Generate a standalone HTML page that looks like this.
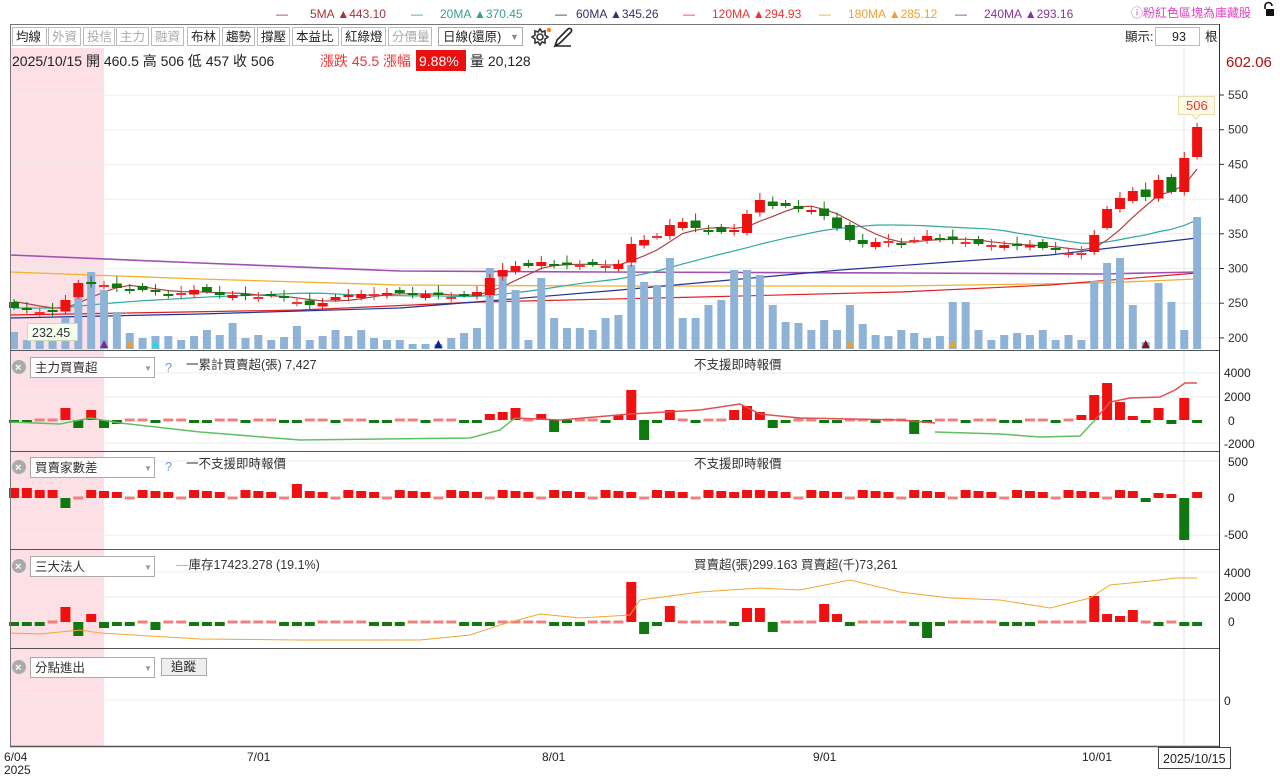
<!DOCTYPE html>
<html><head><meta charset="utf-8">
<style>
body{margin:0;background:#fff;width:1280px;height:775px;overflow:hidden;font-family:"Liberation Sans","Noto Sans CJK TC",sans-serif;}
svg text{font-family:"Liberation Sans","Noto Sans CJK TC",sans-serif;}
</style></head>
<body>
<svg id="s" width="1280" height="775" xmlns="http://www.w3.org/2000/svg">
<rect x="11" y="48" width="93" height="698" fill="#fde0e6"/>
<g id="grid" stroke="#ececec" stroke-width="1"></g>
<line x1="1184" y1="48" x2="1184" y2="746" stroke="#e6e6e6"/>
<g id="mas" fill="none"></g>
<g id="vol" fill="#8fb3d6"></g>
<g id="candles"></g>
<g id="subs"></g>

<rect x="10.5" y="24.5" width="1209" height="722" fill="none" stroke="#777"/>
<line x1="10" y1="350.5" x2="1220" y2="350.5" stroke="#555"/>
<line x1="10" y1="451.5" x2="1220" y2="451.5" stroke="#555"/>
<line x1="10" y1="549.5" x2="1220" y2="549.5" stroke="#555"/>
<line x1="10" y1="648.5" x2="1220" y2="648.5" stroke="#555"/>
<line x1="10" y1="746.5" x2="1220" y2="746.5" stroke="#555" stroke-width="1.5"/>
<line x1="1219.5" y1="24" x2="1219.5" y2="747" stroke="#333"/>

<g font-size="12">
<text x="276" y="18" fill="#a33">—</text><text x="310" y="18" fill="#a33">5MA ▲443.10</text>
<text x="411" y="18" fill="#3a9c96">—</text><text x="440" y="18" fill="#3a9c96">20MA ▲370.45</text>
<text x="555" y="18" fill="#334">—</text><text x="576" y="18" fill="#336">60MA ▲345.26</text>
<text x="683" y="18" fill="#e33">—</text><text x="712" y="18" fill="#e33">120MA ▲294.93</text>
<text x="819" y="18" fill="#f0a030">—</text><text x="848" y="18" fill="#f0a030">180MA ▲285.12</text>
<text x="955" y="18" fill="#839">—</text><text x="984" y="18" fill="#839">240MA ▲293.16</text>
<text x="1131" y="17" fill="#e040c0" font-size="12">ⓘ粉紅色區塊為庫藏股</text>
</g>
<path d="M1265 9 v-3 a3.5 3.5 0 0 1 7 0" fill="none" stroke="#111" stroke-width="1.6"/>
<rect x="1266" y="9" width="8" height="7" fill="#111"/>

<g font-size="12.5">
<g id="tb"></g>
<rect x="438.5" y="27.5" width="84" height="18" fill="#fff" stroke="#aaa"/>
<text x="443" y="41" fill="#222">日線(還原)</text><text x="510" y="40" fill="#888" font-size="9">▼</text>
</g>
<g transform="translate(540,37)" fill="none" stroke="#333" stroke-width="1.6">
<circle r="3"/>
<path d="M0-8 L2-5 L5-6 L5-2 L8 0 L5 2 L5 6 L2 5 L0 8 L-2 5 L-5 6 L-5 2 L-8 0 L-5-2 L-5-6 L-2-5Z"/>
</g>
<circle cx="549" cy="30" r="2.2" fill="#f08020"/>
<path d="M555 46 L557 40 L568 29 A2 2 0 0 1 571 32 L560 43 Z M555 46 h16" fill="none" stroke="#222" stroke-width="1.6"/>
<text x="1125" y="41" font-size="12.5" fill="#222">顯示:</text>
<rect x="1155.5" y="27.5" width="44" height="18" fill="#fff" stroke="#bbb"/>
<text x="1172" y="41" font-size="12.5" fill="#222">93</text>
<text x="1205" y="41" font-size="12.5" fill="#222">根</text>

<g font-size="14">
<text x="12" y="66" fill="#222">2025/10/15 開 460.5  高 506  低 457  收 506</text>
<text x="320" y="66" fill="#e33">漲跌 45.5  漲幅</text>
<rect x="416" y="50" width="50" height="21" fill="#e81010"/>
<text x="419" y="66" fill="#fff">9.88%</text>
<text x="470" y="66" fill="#222">量 20,128</text>
</g>

<g font-size="12" fill="#333" id="pax"></g>
<text x="1226" y="67" font-size="15" fill="#b01010">602.06</text>
<rect x="1178.5" y="96.5" width="36" height="18" fill="#fffbe6" stroke="#e8dcb0"/>
<path d="M1192 114.5 l4 5 l4-5" fill="#fffbe6" stroke="#e8dcb0"/>
<text x="1186" y="110" font-size="13" fill="#e33">506</text>
<rect x="27.5" y="323.5" width="50" height="17" fill="#f4fbef" stroke="#c8dcb8"/>
<text x="32" y="337" font-size="12.5" fill="#333">232.45</text>

<g font-size="12.5">
<g id="hdrs"></g>
<text x="165" y="372" fill="#69c">?</text>
<text x="186" y="369" fill="#333">一累計買賣超(張) 7,427</text>
<text x="165" y="471" fill="#69c">?</text>
<text x="186" y="468" fill="#333">一不支援即時報價</text>
<text x="694" y="369" fill="#333">不支援即時報價</text>
<text x="694" y="468" fill="#333">不支援即時報價</text>
<text x="176" y="569" fill="#333"><tspan fill="#f0a030">—</tspan>庫存17423.278 (19.1%)</text>
<text x="694" y="569" fill="#333">買賣超(張)299.163 買賣超(千)73,261</text>
<rect x="161.5" y="658.5" width="45" height="17" fill="#eee" stroke="#aaa"/>
<text x="171" y="671" fill="#222">追蹤</text>
</g>
<g id="mk"></g>
<g font-size="12" fill="#222">
<text x="1224" y="377">4000</text><text x="1224" y="401">2000</text><text x="1228" y="425">0</text><text x="1224" y="448">-2000</text>
<text x="1228" y="466">500</text><text x="1228" y="502">0</text><text x="1224" y="539">-500</text>
<text x="1224" y="577">4000</text><text x="1224" y="601">2000</text><text x="1228" y="626">0</text>
<text x="1224" y="705">0</text>
</g>
<g font-size="12" fill="#222">
<text x="4" y="761">6/04</text><text x="4" y="774">2025</text>
<text x="247" y="761">7/01</text><text x="542" y="761">8/01</text><text x="813" y="761">9/01</text><text x="1082" y="761">10/01</text>
</g>
<rect x="1158.5" y="747.5" width="72" height="21" fill="#fff" stroke="#444"/>
<text x="1163" y="763" font-size="12.5" fill="#222">2025/10/15</text>
</svg>
<script>
(function(){
var NS="http://www.w3.org/2000/svg";
function el(p,t,a){var e=document.createElementNS(NS,t);for(var k in a)e.setAttribute(k,a[k]);p.appendChild(e);return e;}
var $=function(i){return document.getElementById(i)};
var X=function(i){return 14+i*12.86};
var Y=function(p){return 95+(550-p)*0.694};
[550,500,450,400,350,300,250,200].forEach(function(p){el($('grid'),'line',{x1:10,x2:1219,y1:Y(p),y2:Y(p)});
 el($('pax'),'line',{x1:1219,x2:1224,y1:Y(p),y2:Y(p),stroke:'#333'});
 var t=el($('pax'),'text',{x:1228,y:Y(p)+4});t.textContent=p;});
[373,397,443,461,535,572,597,700].forEach(function(y){el($('grid'),'line',{x1:10,x2:1219,y1:y,y2:y});});
var tb=[["均線",12,34,1],["外資",48,32,0],["投信",83,31,0],["主力",116,32,0],["融資",151,32,0],["布林",187,32,1],["趨勢",222,32,1],["撐壓",257,32,1],["本益比",292,46,1],["紅綠燈",341,44,1],["分價量",388,43,0]];
tb.forEach(function(b){el($('tb'),'rect',{x:b[1]+.5,y:27.5,width:b[2],height:18,fill:'#fff',stroke:'#bbb'});
 var t=el($('tb'),'text',{x:b[1]+4,y:41,fill:b[3]?'#222':'#aaa'});t.textContent=b[0];});
[[357,"主力買賣超"],[457,"買賣家數差"],[556,"三大法人"],[657,"分點進出"]].forEach(function(h){
 el($('hdrs'),'circle',{cx:19,cy:h[0]+10,r:7,fill:'#aaa'});
 var t=el($('hdrs'),'text',{x:15,y:h[0]+14,fill:'#fff','font-size':11,'font-weight':'bold'});t.textContent='×';
 el($('hdrs'),'rect',{x:30.5,y:h[0]+.5,width:124,height:20,fill:'#fff',stroke:'#aaa'});
 t=el($('hdrs'),'text',{x:35,y:h[0]+15,fill:'#333'});t.textContent=h[1];
 t=el($('hdrs'),'text',{x:144,y:h[0]+14,fill:'#999','font-size':8});t.textContent='▼';
});
var cy=[308,310,312,310,300,283,282,285,288,289,290,292,294,293,290,292,295,295,296,297,296,298,302,305,303,297,295,294,294,293,293,295,294,295,297,296,292,278,270,266,266,262,264,265,265,265,266,264,244,240,236,225,222,228,230,232,230,214,200,206,206,209,210,216,228,240,244,242,241,243,240,236,238,240,242,244,245,245,246,245,248,250,253,253,235,209,198,191,197,180,192,158,127];
var vy=[332,340,338,330,318,290,272,290,312,333,338,336,336,340,336,330,335,323,338,335,340,337,326,340,336,330,336,330,338,340,340,344,344,344,338,333,328,268,270,290,340,278,318,328,328,330,318,315,265,282,285,258,318,318,305,300,270,270,275,305,322,323,330,320,330,305,324,335,336,330,333,338,336,302,302,330,340,335,333,335,330,340,335,340,281,263,258,305,342,283,302,330,217];
for(var i=0;i<93;i++){var x=X(i);el($('vol'),'rect',{x:x-4,y:vy[i],width:8,height:349-vy[i]});}
function pl(pts,c,w){el($('mas'),'polyline',{points:pts.map(function(p){return p.join(',')}).join(' '),stroke:c,'stroke-width':w||1.2});}
pl([[10,255],[200,263],[400,271],[600,272],[900,273],[1100,274],[1197,272]],'#a050b0',1.6);
pl([[10,272],[200,279],[400,285],[600,286],[900,286],[1100,283],[1197,279]],'#f0b030',1.3);
pl([[10,315],[300,310],[480,302],[700,297],[900,292],[1050,285],[1197,273]],'#e02020',1.2);
pl([[10,318],[200,314],[400,308],[500,300],[620,290],[840,270],[950,262],[1050,255],[1197,238]],'#223399',1.2);
function ma(n){var r=[];for(var i=0;i<93;i++){var s=0;for(var k=0;k<n;k++){var j=i-k;s+=j>=0?cy[j]:(n==20?(305+(-j)*0.3):300);}r.push([X(i),s/n]);}return r;}
pl(ma(20),'#30a8a0',1.2);
var m5=ma(5);m5[92][1]=169;m5[91][1]=185;pl(m5,'#b04040',1.2);
var prev=305;
for(var i=0;i<93;i++){var c=cy[i],o=(i==92)?157:prev+(((i*7)%5)-2)*1.5;if(i==84)o=252;if(i==85)o=228;
 var up=c<o, col=up?'#ee1111':'#117711';
 if(Math.abs(c-o)<2){col=(i%3)?'#e33':'#171';o=c+1;}
 var tp=Math.min(o,c),h=Math.max(2,Math.abs(o-c)),x=X(i);
 var wk=3+((i*13)%5);
 el($('candles'),'line',{x1:x,x2:x,y1:tp-wk,y2:tp+h+wk*0.6,stroke:col});
 el($('candles'),'rect',{x:x-5,y:tp,width:10,height:h,fill:col});
 prev=c;}
function tri(x,y,c){el($('mk'),'path',{d:'M'+(x-4)+' '+y+' L'+x+' '+(y-8)+' L'+(x+4)+' '+y+'Z',fill:c});}
tri(X(7),348,'#7a2a90');tri(X(9),348,'#f0a020');tri(X(11),348,'#20d8e8');tri(X(33),348,'#102090');tri(X(65),348,'#f0a020');tri(X(73),348,'#f0a020');tri(X(88),348,'#8b1010');
var S=$('subs');
function bar(x,z,v,big){var col=v>0?'#ee1111':'#117711';var h=Math.abs(v);if(h<3&&!big){el(S,'rect',{x:x-5,y:z-1.5,width:10,height:3,fill:v>0?'#f08080':'#117711'});return;}
 el(S,'rect',{x:x-5,y:v>0?z-h:z,width:10,height:Math.max(h,3),fill:col});}
var p2={4:12,5:-8,6:10,7:-8,8:-4,37:6,38:8,39:12,41:6,42:-12,47:5,48:30,49:-20,51:10,56:10,57:14,58:8,59:-8,70:-14,83:5,84:25,85:37,86:18,87:4,89:12,90:-4,91:22};
var p3={0:10,1:10,2:8,3:8,4:-10,22:14,57:8,88:-4,89:5,90:4,91:-42};
var p4={4:15,5:-14,6:8,7:-6,9:-4,11:-8,48:40,49:-12,51:16,57:14,58:14,59:-10,63:18,64:8,71:-16,84:26,85:8,86:6,87:12,89:-4};
for(var i=0;i<93;i++){var x=X(i);
 bar(x,420,p2[i]!==undefined?p2[i]:((i*37)%7<3?-3:2));
 bar(x,498,p3[i]!==undefined?p3[i]:(i%4==1?2:6+(i*11)%4));
 bar(x,622,p4[i]!==undefined?p4[i]:((i*29)%7<3?-4:2));}
el(S,'polyline',{points:'10,422 60,424 90,418 120,423 200,432 300,440 470,438 500,430 515,418',fill:'none',stroke:'#60c060','stroke-width':1.5});
el(S,'polyline',{points:'515,418 560,420 630,414 700,410 740,404 760,414 800,418 900,420 935,423',fill:'none',stroke:'#e05050','stroke-width':1.5});
el(S,'polyline',{points:'935,432 1000,434 1040,437 1080,436 1095,420',fill:'none',stroke:'#60c060','stroke-width':1.5});
el(S,'polyline',{points:'1095,420 1110,402 1130,398 1160,397 1175,390 1185,383 1197,383',fill:'none',stroke:'#e05050','stroke-width':1.5});
el(S,'polyline',{points:'10,633 40,634 60,632 80,630 100,633 150,636 200,639 300,640 420,640 470,635 500,625 540,614 580,618 630,615 640,600 700,592 760,588 800,590 850,580 900,592 950,598 1000,600 1050,608 1090,598 1110,585 1140,582 1160,580 1175,578 1197,578',fill:'none',stroke:'#f0a830','stroke-width':1});
})();
</script>
</body></html>
